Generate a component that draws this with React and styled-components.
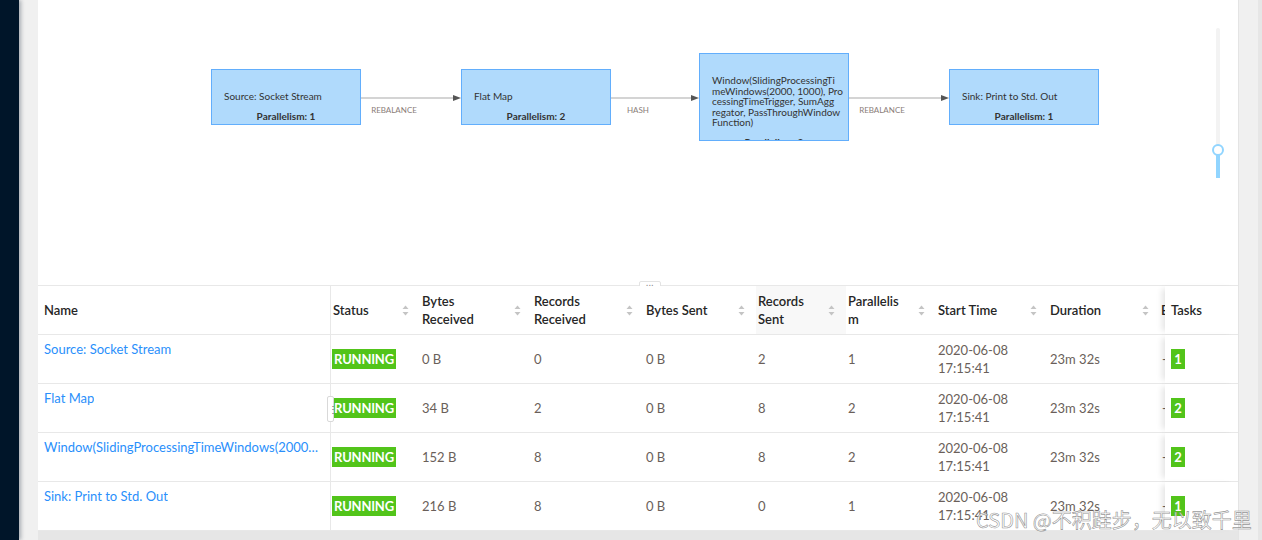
import React from "react";
import styled, { createGlobalStyle } from "styled-components";

const GlobalStyle = createGlobalStyle`
  html, body { margin: 0; padding: 0; }
  body {
    background: #f0f0f0;
    font-family: Lato, "Open Sans", "Noto Sans CJK SC", sans-serif;
    overflow: hidden;
  }
  * { box-sizing: border-box; }
`;

const Page = styled.div`
  position: relative;
  display: flex;
  height: 540px;
  overflow: hidden;
`;

const Sider = styled.aside`
  flex: none;
  width: 19px;
  background: #001529;
  box-shadow: 2px 0 4px rgba(0, 21, 41, 0.3);
  z-index: 2;
`;

const Main = styled.main`
  flex: 1;
  display: flex;
  padding-left: 19px;
`;

const Card = styled.section`
  flex: none;
  width: 1201px;
  display: flex;
  flex-direction: column;
  background: #fff;
  border-right: 1px solid #e4e4e4;
`;

const Gutter = styled.div`
  flex: 1;
  display: flex;
  justify-content: flex-end;
`;

const PageScroll = styled.div`
  width: 4px;
  background: #e6e6e6;
`;

/* ---------- graph ---------- */

const Graph = styled.div`
  position: relative;
  height: 285px;
  flex: none;
`;

const Edges = styled.svg`
  position: absolute;
  inset: 0;
  width: 100%;
  height: 100%;
`;

const Node = styled.div`
  position: absolute;
  width: 150px;
  overflow: hidden;
  padding: 21px 12px 0;
  background: #b0dafc;
  border: 1px solid #62aefc;
  color: #333;
  font-size: 10px;
`;

const NodeTitle = styled.div`
  display: flex;
  flex-direction: column;
  line-height: 10.5px;
  white-space: nowrap;
`;

const NodePar = styled.div`
  margin-top: 9px;
  line-height: 10px;
  font-weight: 700;
  text-align: center;
`;

const Zoom = styled.div`
  position: absolute;
  left: 1178px;
  top: 28px;
  width: 4px;
  height: 150px;
  border-radius: 2px;
  background: #f3f3f3;
`;

const ZoomFill = styled.div`
  position: absolute;
  left: 0;
  bottom: 0;
  width: 4px;
  height: 28px;
  background: #91d5ff;
`;

const ZoomHandle = styled.div`
  position: absolute;
  left: -4px;
  top: 116px;
  width: 12px;
  height: 12px;
  border-radius: 50%;
  background: #fff;
  border: 2px solid #91d5ff;
`;

/* ---------- split ---------- */

const Split = styled.div`
  position: relative;
  height: 1px;
  flex: none;
  background: #e8e8e8;
`;

const SplitGrip = styled.div`
  position: absolute;
  left: 601px;
  top: -4px;
  width: 22px;
  height: 8px;
  border: 1px solid #e3e3e3;
  border-radius: 2px;
  background: #fff;
  color: #888;
  font-size: 9px;
  line-height: 2px;
  text-align: center;
  letter-spacing: 0.5px;
`;

/* ---------- table ---------- */

const Table = styled.div`
  flex: none;
`;

const Row = styled.div`
  position: relative;
  display: grid;
  grid-template-columns: 293px 89px 112px 112px 112px 90px 90px 112px 112px 5px 73px;
  height: 49px;
  border-bottom: 1px solid #e8e8e8;
`;

const Cell = styled.div`
  display: flex;
  align-items: center;
  min-width: 0;
  padding-left: ${(p) => p.$pad ?? 2}px;
  overflow: hidden;
  background: ${(p) => p.$bg || "#fff"};
  font-size: 13px;
  line-height: 18px;
  color: #6a5f5a;
  white-space: nowrap;
`;

const NameCell = styled(Cell)`
  align-items: flex-start;
  padding: 4px 9px 0 6px;
  border-right: 1px solid #e8e8e8;
`;

const TaskCell = styled(Cell)`
  padding-left: 6px;
  box-shadow: -6px 0 6px -3px rgba(0, 0, 0, 0.1);
  z-index: 1;
`;

const HeadCell = styled(Cell)`
  justify-content: space-between;
  padding-right: 11px;
  color: #262626;
  font-weight: 600;
`;

const HeadName = styled(HeadCell)`
  border-right: 1px solid #e8e8e8;
  padding-left: 6px;
`;

const HeadTask = styled(HeadCell)`
  padding-left: 6px;
  box-shadow: -6px 0 6px -3px rgba(0, 0, 0, 0.1);
  z-index: 1;
`;

const Label = styled.span`
  display: flex;
  flex-direction: column;
`;

const Link = styled.a`
  display: block;
  overflow: hidden;
  text-overflow: ellipsis;
  color: #2a8ffb;
  text-decoration: none;
  font-size: 13px;
  line-height: 20px;
`;

const Tag = styled.span`
  display: inline-flex;
  align-items: center;
  justify-content: center;
  width: ${(p) => p.$w}px;
  height: 20px;
  background: #52c41a;
  color: #fff;
  font-weight: 700;
  font-size: 13px;
  letter-spacing: ${(p) => (p.$w > 20 ? "-0.2px" : "0")};
`;

const Stack = styled.span`
  display: flex;
  flex-direction: column;
  white-space: nowrap;
`;

const Resizer = styled.div`
  position: absolute;
  left: 289px;
  top: 12px;
  width: 7px;
  height: 26px;
  border: 1px solid #d9d9d9;
  border-radius: 2px;
  background: #fff;
  color: #666;
  font-size: 10px;
  line-height: 24px;
  text-align: center;
  z-index: 2;
`;

const HScroll = styled.div`
  flex: 1;
  background: #e6e6e6;
`;

const Watermark = styled.div`
  position: absolute;
  left: 976px;
  top: 506px;
  font-family: "Noto Sans CJK SC", "Noto Sans", sans-serif;
  font-size: 20px;
  line-height: 28px;
  color: rgba(255, 255, 255, 0.7);
  -webkit-text-stroke: 0.6px rgba(120, 120, 120, 0.8);
  white-space: nowrap;
  z-index: 5;
`;

const Sorter = () => (
  <svg width="7" height="11" viewBox="0 0 7 11">
    <path d="M3.5 0.5 L6.5 4 L0.5 4 Z" fill="#c4c4c4" />
    <path d="M3.5 10.5 L6.5 7 L0.5 7 Z" fill="#c4c4c4" />
  </svg>
);

const nodes = [
  { left: 173, top: 69, h: 56, title: ["Source: Socket Stream"], par: 1 },
  { left: 423, top: 69, h: 56, title: ["Flat Map"], par: 2 },
  {
    left: 661,
    top: 53,
    h: 88,
    title: [
      "Window(SlidingProcessingTi",
      "meWindows(2000, 1000), Pro",
      "cessingTimeTrigger, SumAgg",
      "regator, PassThroughWindow",
      "Function)",
    ],
    par: 2,
  },
  { left: 911, top: 69, h: 56, title: ["Sink: Print to Std. Out"], par: 1 },
];

const edges = [
  { x1: 322, x2: 423, lx: 356, label: "REBALANCE" },
  { x1: 572, x2: 661, lx: 600, label: "HASH" },
  { x1: 810, x2: 911, lx: 844, label: "REBALANCE" },
];

const heads = [
  { t: ["Status"] },
  { t: ["Bytes", "Received"] },
  { t: ["Records", "Received"] },
  { t: ["Bytes Sent"] },
  { t: ["Records", "Sent"], bg: "#f8f8f8" },
  { t: ["Parallelis", "m"] },
  { t: ["Start Time"] },
  { t: ["Duration"] },
];

const rows = [
  { name: "Source: Socket Stream", br: "0 B", rr: "0", bs: "0 B", rs: "2", par: 1 },
  { name: "Flat Map", br: "34 B", rr: "2", bs: "0 B", rs: "8", par: 2 },
  {
    name: "Window(SlidingProcessingTimeWindows(2000, 1000), ProcessingTimeTrigger, SumAggregator, PassThroughWindowFunction)",
    br: "152 B",
    rr: "8",
    bs: "0 B",
    rs: "8",
    par: 2,
  },
  { name: "Sink: Print to Std. Out", br: "216 B", rr: "8", bs: "0 B", rs: "0", par: 1 },
];

export default function App() {
  return (
    <Page>
      <GlobalStyle />
      <Sider />
      <Main>
        <Card>
          <Graph>
            <Edges>
              {edges.map((e) => (
                <g key={e.x1}>
                  <line x1={e.x1} y1="98" x2={e.x2 - 6} y2="98" stroke="#d4d4d4" strokeWidth="2" />
                  <path d={`M${e.x2} 98 L${e.x2 - 8} 95 L${e.x2 - 8} 101 Z`} fill="#555" />
                  <text
                    x={e.lx}
                    y="113"
                    textAnchor="middle"
                    fontSize="8"
                    fill="#8a7d79"
                    fontFamily="Lato, sans-serif"
                  >
                    {e.label}
                  </text>
                </g>
              ))}
            </Edges>
            {nodes.map((n) => (
              <Node key={n.left} style={{ left: n.left, top: n.top, height: n.h }}>
                <NodeTitle>
                  {n.title.map((l) => (
                    <span key={l}>{l}</span>
                  ))}
                </NodeTitle>
                <NodePar>Parallelism: {n.par}</NodePar>
              </Node>
            ))}
            <Zoom>
              <ZoomFill />
              <ZoomHandle />
            </Zoom>
          </Graph>

          <Split>
            <SplitGrip>...</SplitGrip>
          </Split>

          <Table>
            <Row>
              <HeadName>Name</HeadName>
              {heads.map((h) => (
                <HeadCell key={h.t.join()} $bg={h.bg}>
                  <Label>
                    {h.t.map((l) => (
                      <span key={l}>{l}</span>
                    ))}
                  </Label>
                  <Sorter />
                </HeadCell>
              ))}
              <HeadCell $pad={1}>E</HeadCell>
              <HeadTask>Tasks</HeadTask>
            </Row>

            {rows.map((r, i) => (
              <Row key={r.name}>
                <NameCell>
                  <Link>{r.name}</Link>
                </NameCell>
                <Cell $pad={1}>
                  <Tag $w={64}>RUNNING</Tag>
                </Cell>
                <Cell>{r.br}</Cell>
                <Cell>{r.rr}</Cell>
                <Cell>{r.bs}</Cell>
                <Cell>{r.rs}</Cell>
                <Cell>{r.par}</Cell>
                <Cell>
                  <Stack>
                    <span>2020-06-08</span>
                    <span>17:15:41</span>
                  </Stack>
                </Cell>
                <Cell>23m 32s</Cell>
                <Cell $pad={2}>-</Cell>
                <TaskCell>
                  <Tag $w={14}>{r.par}</Tag>
                </TaskCell>
                {i === 1 && <Resizer>⋮</Resizer>}
              </Row>
            ))}
          </Table>
          <HScroll />
        </Card>
        <Gutter>
          <PageScroll />
        </Gutter>
      </Main>
      <Watermark>CSDN @不积跬步，无以致千里</Watermark>
    </Page>
  );
}
